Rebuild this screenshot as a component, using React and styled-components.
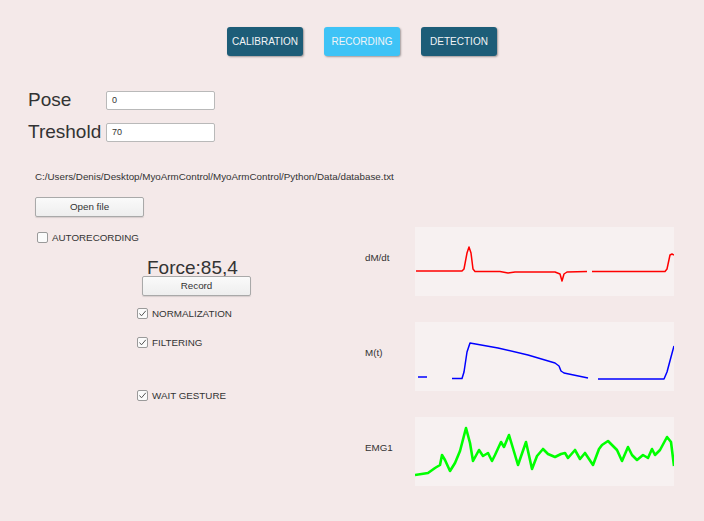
import React from 'react';
import styled, { createGlobalStyle } from 'styled-components';

const GlobalStyle = createGlobalStyle`
  html, body {
    margin: 0;
    padding: 0;
    background: #f4e9e9;
    font-family: "Liberation Sans", Arial, sans-serif;
    color: #333;
  }
`;

const Page = styled.div`
  width: 704px;
  height: 521px;
  overflow: hidden;
  background: #f4e9e9;
`;

const TopBar = styled.div`
  display: flex;
  gap: 21px;
  padding: 27px 0 0 227px;
`;

const TabButton = styled.button`
  width: 76px;
  height: 29px;
  border: none;
  border-radius: 3px;
  background: ${p => (p.$active ? '#3ec3f6' : '#1d5d78')};
  color: #f2f4f6;
  font-family: "Liberation Sans", Arial, sans-serif;
  font-size: 10px;
  box-shadow: 1px 1px 2px rgba(0, 0, 0, 0.35);
  padding: 0;
`;

const Form = styled.div`
  display: flex;
  flex-direction: column;
  gap: 10px;
  padding: 33px 0 0 28px;
`;

const FieldRow = styled.div`
  display: flex;
  align-items: center;
`;

const FieldLabel = styled.span`
  width: 78px;
  font-size: 19px;
  color: #333;
`;

const FieldInput = styled.div`
  box-sizing: border-box;
  width: 109px;
  height: 19px;
  background: #fff;
  border: 1px solid #b9b9b9;
  border-radius: 2px;
  font-size: 9px;
  padding-left: 5px;
  line-height: 17px;
  color: #333;
`;

const Lower = styled.div`
  display: flex;
`;

const LeftCol = styled.div`
  width: 365px;
  padding-left: 35px;
  box-sizing: border-box;
  display: flex;
  flex-direction: column;
`;

const PathText = styled.div`
  margin-top: 28px;
  font-size: 9.8px;
  white-space: nowrap;
  color: #333;
`;

const PlainButton = styled.div`
  box-sizing: border-box;
  width: 109px;
  height: 20px;
  margin-top: ${p => p.$top || 0}px;
  border: 1px solid #a9a9a9;
  border-radius: 2px;
  background: linear-gradient(#fafafa, #eeeeee);
  font-size: 9.8px;
  text-align: center;
  line-height: 18px;
  color: #333;
  box-shadow: 0 1px 1px rgba(0, 0, 0, 0.12);
`;

const CheckRow = styled.div`
  display: flex;
  align-items: center;
  gap: 4px;
  font-size: 9.8px;
  color: #333;
  margin-top: ${p => p.$top || 0}px;
  margin-left: ${p => p.$left || 0}px;
`;

const Box = styled.span`
  box-sizing: border-box;
  width: 11px;
  height: 11px;
  border: 1px solid #9a9a9a;
  border-radius: 2px;
  background: #fbfbfb;
  display: flex;
  align-items: center;
  justify-content: center;
`;

const ForceBlock = styled.div`
  margin: 16px 0 0 107px;
  display: flex;
  flex-direction: column;
`;

const ForceText = styled.div`
  font-size: 19px;
  color: #333;
  margin-left: 5px;
  line-height: 17px;
`;

const RightCol = styled.div`
  display: flex;
  flex-direction: column;
  gap: 26px;
  padding-top: 84px;
`;

const ChartRow = styled.div`
  display: flex;
  align-items: center;
`;

const ChartLabel = styled.span`
  width: 50px;
  font-size: 9.8px;
  color: #333;
  margin-top: -8px;
`;

const ChartBox = styled.div`
  width: 259px;
  height: 69px;
  background: #f7f1f1;
`;

const Check = ({ on }) => (
  <Box>
    {on && (
      <svg width="9" height="9" viewBox="0 0 9 9">
        <polyline points="1.5,4.5 3.5,6.8 7.8,1.8" fill="none" stroke="#555" strokeWidth="1" />
      </svg>
    )}
  </Box>
);

const CheckItem = ({ on, children, top, left }) => (
  <CheckRow $top={top} $left={left}>
    <Check on={on} />
    {children}
  </CheckRow>
);

const dMdt = [
  [[1, 44], [47, 44], [49, 42], [52, 26], [54, 20], [56, 26], [58, 42], [60, 44.5], [85, 44.5], [93, 46], [100, 45], [140, 45], [145, 47], [147, 54], [149, 47], [152, 45], [172, 44.5]],
  [[177, 44.5], [250, 44.5], [252, 42], [255, 28], [257, 27], [259, 28]],
];

const mt = [
  [[3, 55], [12, 55]],
  [[37, 56.5], [47, 56.5], [49, 50], [52, 30], [55, 21], [83, 26], [113, 33], [140, 41], [144, 44], [146, 49], [149, 51], [173, 56]],
  [[183, 57], [249, 57], [252, 50], [256, 35], [259, 24]],
];

const emg = [[
  [0, 58], [13, 56], [20, 51], [25, 48], [27, 38], [30, 43], [35, 54], [40, 46], [45, 34], [51, 11], [55, 26], [58, 44],
  [64, 33], [68, 39], [73, 36], [77, 44], [80, 38], [86, 25], [89, 30], [94, 18], [97, 28], [103, 48], [111, 25],
  [117, 52], [122, 39], [128, 32], [133, 37], [140, 40], [146, 37], [150, 36], [153, 41], [160, 33], [165, 42],
  [170, 36], [178, 48], [184, 32], [187, 28], [193, 24], [202, 33], [207, 44], [213, 30], [217, 38], [222, 43],
  [228, 38], [233, 41], [237, 32], [240, 38], [245, 33], [252, 20], [256, 25], [259, 49],
]];

const Plot = ({ segments, color, width }) => (
  <svg width="259" height="69" viewBox="0 0 259 69">
    {segments.map((pts, i) => (
      <polyline
        key={i}
        points={pts.map(p => p.join(',')).join(' ')}
        fill="none"
        stroke={color}
        strokeWidth={width}
        strokeLinejoin="round"
      />
    ))}
  </svg>
);

const charts = [
  { label: 'dM/dt', data: dMdt, color: '#ff0000', width: 1.5 },
  { label: 'M(t)', data: mt, color: '#0000ff', width: 1.5 },
  { label: 'EMG1', data: emg, color: '#00ff00', width: 2.6 },
];

export default function App() {
  return (
    <Page>
      <GlobalStyle />
      <TopBar>
        <TabButton>CALIBRATION</TabButton>
        <TabButton $active>RECORDING</TabButton>
        <TabButton>DETECTION</TabButton>
      </TopBar>
      <Form>
        <FieldRow>
          <FieldLabel>Pose</FieldLabel>
          <FieldInput>0</FieldInput>
        </FieldRow>
        <FieldRow>
          <FieldLabel>Treshold</FieldLabel>
          <FieldInput>70</FieldInput>
        </FieldRow>
      </Form>
      <Lower>
        <LeftCol>
          <PathText>C:/Users/Denis/Desktop/MyoArmControl/MyoArmControl/Python/Data/database.txt</PathText>
          <PlainButton $top={15}>Open file</PlainButton>
          <CheckItem top={15} left={2}>AUTORECORDING</CheckItem>
          <ForceBlock>
            <ForceText>Force:85,4</ForceText>
            <PlainButton>Record</PlainButton>
          </ForceBlock>
          <CheckItem on top={12} left={102}>NORMALIZATION</CheckItem>
          <CheckItem on top={18} left={102}>FILTERING</CheckItem>
          <CheckItem on top={42} left={102}>WAIT GESTURE</CheckItem>
        </LeftCol>
        <RightCol>
          {charts.map(c => (
            <ChartRow key={c.label}>
              <ChartLabel>{c.label}</ChartLabel>
              <ChartBox>
                <Plot segments={c.data} color={c.color} width={c.width} />
              </ChartBox>
            </ChartRow>
          ))}
        </RightCol>
      </Lower>
    </Page>
  );
}
